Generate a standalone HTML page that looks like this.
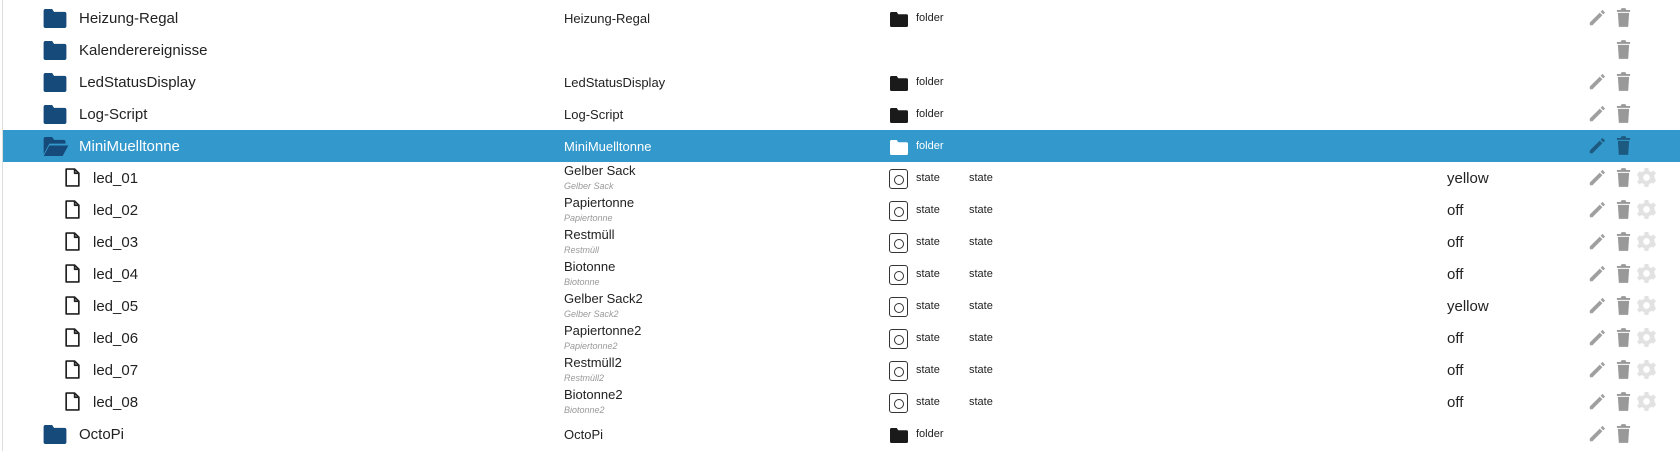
<!DOCTYPE html>
<html><head><meta charset="utf-8"><style>
body{margin:0;width:1680px;height:451px;background:#fff;font-family:"Liberation Sans",sans-serif;overflow:hidden;position:relative;color:#222}
.vl{position:absolute;left:2px;top:0;width:1px;height:451px;background:#ddd}
.r{position:absolute;left:3px;width:1677px;height:32px}
.sel{background:#3398cc;color:#fff}
.a{position:absolute;white-space:nowrap}
.n{font-size:15px;top:8px}
.c2{left:561px;font-size:13px;top:9px}
.t1{left:561px;font-size:13px;top:1px}
.t2{left:561px;font-size:9px;top:19px;font-style:italic;color:#999}
.fi{position:absolute;left:40px;top:7px}
.sm{font-size:11px;top:10px}
.val{left:1444px;font-size:15px;top:8px}
.ic{position:absolute;top:8px}
</style></head><body>
<div class="vl"></div>
<svg width="0" height="0" style="position:absolute"><defs>
<symbol id="fold" viewBox="0 0 24 20"><path d="M0 2Q0 0 2 0H9L11 3H22Q24 3 24 5V18Q24 20 22 20H2Q0 20 0 18Z"/></symbol>
<symbol id="open" viewBox="0 0 26 20"><path d="M0 2Q0 0 2 0H9L11 3H21Q23 3 23 5V7H6L0 18Z M6 9H26L20 20H0Z"/></symbol>
<symbol id="file" viewBox="0 0 14 18"><path d="M1 1H9L13 5V17H1Z M9 1V5H13" fill="none" stroke="#222" stroke-width="1.6" stroke-linejoin="round"/></symbol>
<symbol id="pen" viewBox="0 0 20 20"><path d="M2 15L13 4L16 7L5 18H2Z M14 3L16 1L19 4L17 6Z"/></symbol>
<symbol id="trash" viewBox="0 0 16 20"><path d="M1 2H5L6 0H10L11 2H15V4H1Z M2 5H14L13 20H3Z"/></symbol>
<symbol id="gear" viewBox="0 0 20 20"><path d="M8 0H12L12.6 3 15 4.2 17.6 2.6 20 5.5 18 7.8 18.6 10.5 20 13 17.5 16.5 15 15.6 12.6 17 12 20H8L7.4 17 5 15.8 2.4 17.4 0 14.5 2 12.2 1.4 9.5 0 7 2.5 3.5 5 4.4 7.4 3Z M10 6.5A3.5 3.5 0 1 0 10.01 6.5Z" fill-rule="evenodd"/></symbol>
</defs></svg>

<div class="r" style="top:2px">
<svg class="fi" width="24" height="19" fill="#164a7a"><use href="#fold"/></svg>
<div class="a n" style="left:76px">Heizung-Regal</div><div class="a c2">Heizung-Regal</div>
<svg class="ic" style="left:886px;top:10px" width="20" height="15" fill="#1a1a1a"><use href="#fold"/></svg><div class="a sm" style="left:913px">folder</div>
<svg class="ic" style="left:1585px;top:7px" width="18" height="18" fill="#a0a0a0"><use href="#pen"/></svg><svg class="ic" style="left:1613px;top:6px" width="15" height="19" fill="#999"><use href="#trash"/></svg>
</div>
<div class="r" style="top:34px">
<svg class="fi" width="24" height="19" fill="#164a7a"><use href="#fold"/></svg>
<div class="a n" style="left:76px">Kalenderereignisse</div>
<svg class="ic" style="left:1613px;top:6px" width="15" height="19" fill="#999"><use href="#trash"/></svg>
</div>
<div class="r" style="top:66px">
<svg class="fi" width="24" height="19" fill="#164a7a"><use href="#fold"/></svg>
<div class="a n" style="left:76px">LedStatusDisplay</div><div class="a c2">LedStatusDisplay</div>
<svg class="ic" style="left:886px;top:10px" width="20" height="15" fill="#1a1a1a"><use href="#fold"/></svg><div class="a sm" style="left:913px">folder</div>
<svg class="ic" style="left:1585px;top:7px" width="18" height="18" fill="#a0a0a0"><use href="#pen"/></svg><svg class="ic" style="left:1613px;top:6px" width="15" height="19" fill="#999"><use href="#trash"/></svg>
</div>
<div class="r" style="top:98px">
<svg class="fi" width="24" height="19" fill="#164a7a"><use href="#fold"/></svg>
<div class="a n" style="left:76px">Log-Script</div><div class="a c2">Log-Script</div>
<svg class="ic" style="left:886px;top:10px" width="20" height="15" fill="#1a1a1a"><use href="#fold"/></svg><div class="a sm" style="left:913px">folder</div>
<svg class="ic" style="left:1585px;top:7px" width="18" height="18" fill="#a0a0a0"><use href="#pen"/></svg><svg class="ic" style="left:1613px;top:6px" width="15" height="19" fill="#999"><use href="#trash"/></svg>
</div>
<div class="r sel" style="top:130px">
<svg class="fi" width="26" height="19" fill="#164a7a"><use href="#open"/></svg>
<div class="a n" style="left:76px">MiniMuelltonne</div><div class="a c2">MiniMuelltonne</div>
<svg class="ic" style="left:886px;top:10px" width="20" height="15" fill="#fff"><use href="#fold"/></svg><div class="a sm" style="left:913px">folder</div>
<svg class="ic" style="left:1585px;top:7px" width="18" height="18" fill="#1d5a80"><use href="#pen"/></svg><svg class="ic" style="left:1613px;top:6px" width="15" height="19" fill="#1d5a80"><use href="#trash"/></svg>
</div>

<div id="st"></div>
<script>
var d=[["led_01","Gelber Sack","yellow"],["led_02","Papiertonne","off"],["led_03","Restmüll","off"],["led_04","Biotonne","off"],["led_05","Gelber Sack2","yellow"],["led_06","Papiertonne2","off"],["led_07","Restmüll2","off"],["led_08","Biotonne2","off"]];
var h="";
d.forEach(function(x,i){var t=162+i*32;
h+='<div class="r" style="top:'+t+'px"><svg class="ic" style="left:62px;top:6px" width="15" height="19"><use href="#file"/></svg>'+
'<div class="a n" style="left:90px">'+x[0]+'</div><div class="a t1">'+x[1]+'</div><div class="a t2">'+x[1]+'</div>'+
'<div class="a" style="left:886px;top:7px;width:19px;height:20px;border:1.5px solid #333;border-radius:3px;box-sizing:border-box"><div style="position:absolute;left:4px;top:5px;width:8px;height:8px;border:1.3px solid #333;border-radius:50%"></div></div>'+
'<div class="a sm" style="left:913px">state</div><div class="a sm" style="left:966px">state</div>'+
'<div class="a val">'+x[2]+'</div>'+
'<svg class="ic" style="left:1585px;top:7px" width="18" height="18" fill="#a0a0a0"><use href="#pen"/></svg><svg class="ic" style="left:1613px;top:6px" width="15" height="19" fill="#999"><use href="#trash"/></svg>'+
'<svg class="ic" style="left:1634px;top:6px" width="19" height="19" fill="#e2e2e2"><use href="#gear"/></svg></div>';});
document.getElementById("st").innerHTML=h;
</script>

<div class="r" style="top:418px">
<svg class="fi" width="24" height="19" fill="#164a7a"><use href="#fold"/></svg>
<div class="a n" style="left:76px">OctoPi</div><div class="a c2">OctoPi</div>
<svg class="ic" style="left:886px;top:10px" width="20" height="15" fill="#1a1a1a"><use href="#fold"/></svg><div class="a sm" style="left:913px">folder</div>
<svg class="ic" style="left:1585px;top:7px" width="18" height="18" fill="#a0a0a0"><use href="#pen"/></svg><svg class="ic" style="left:1613px;top:6px" width="15" height="19" fill="#999"><use href="#trash"/></svg>
</div>
</body></html>
